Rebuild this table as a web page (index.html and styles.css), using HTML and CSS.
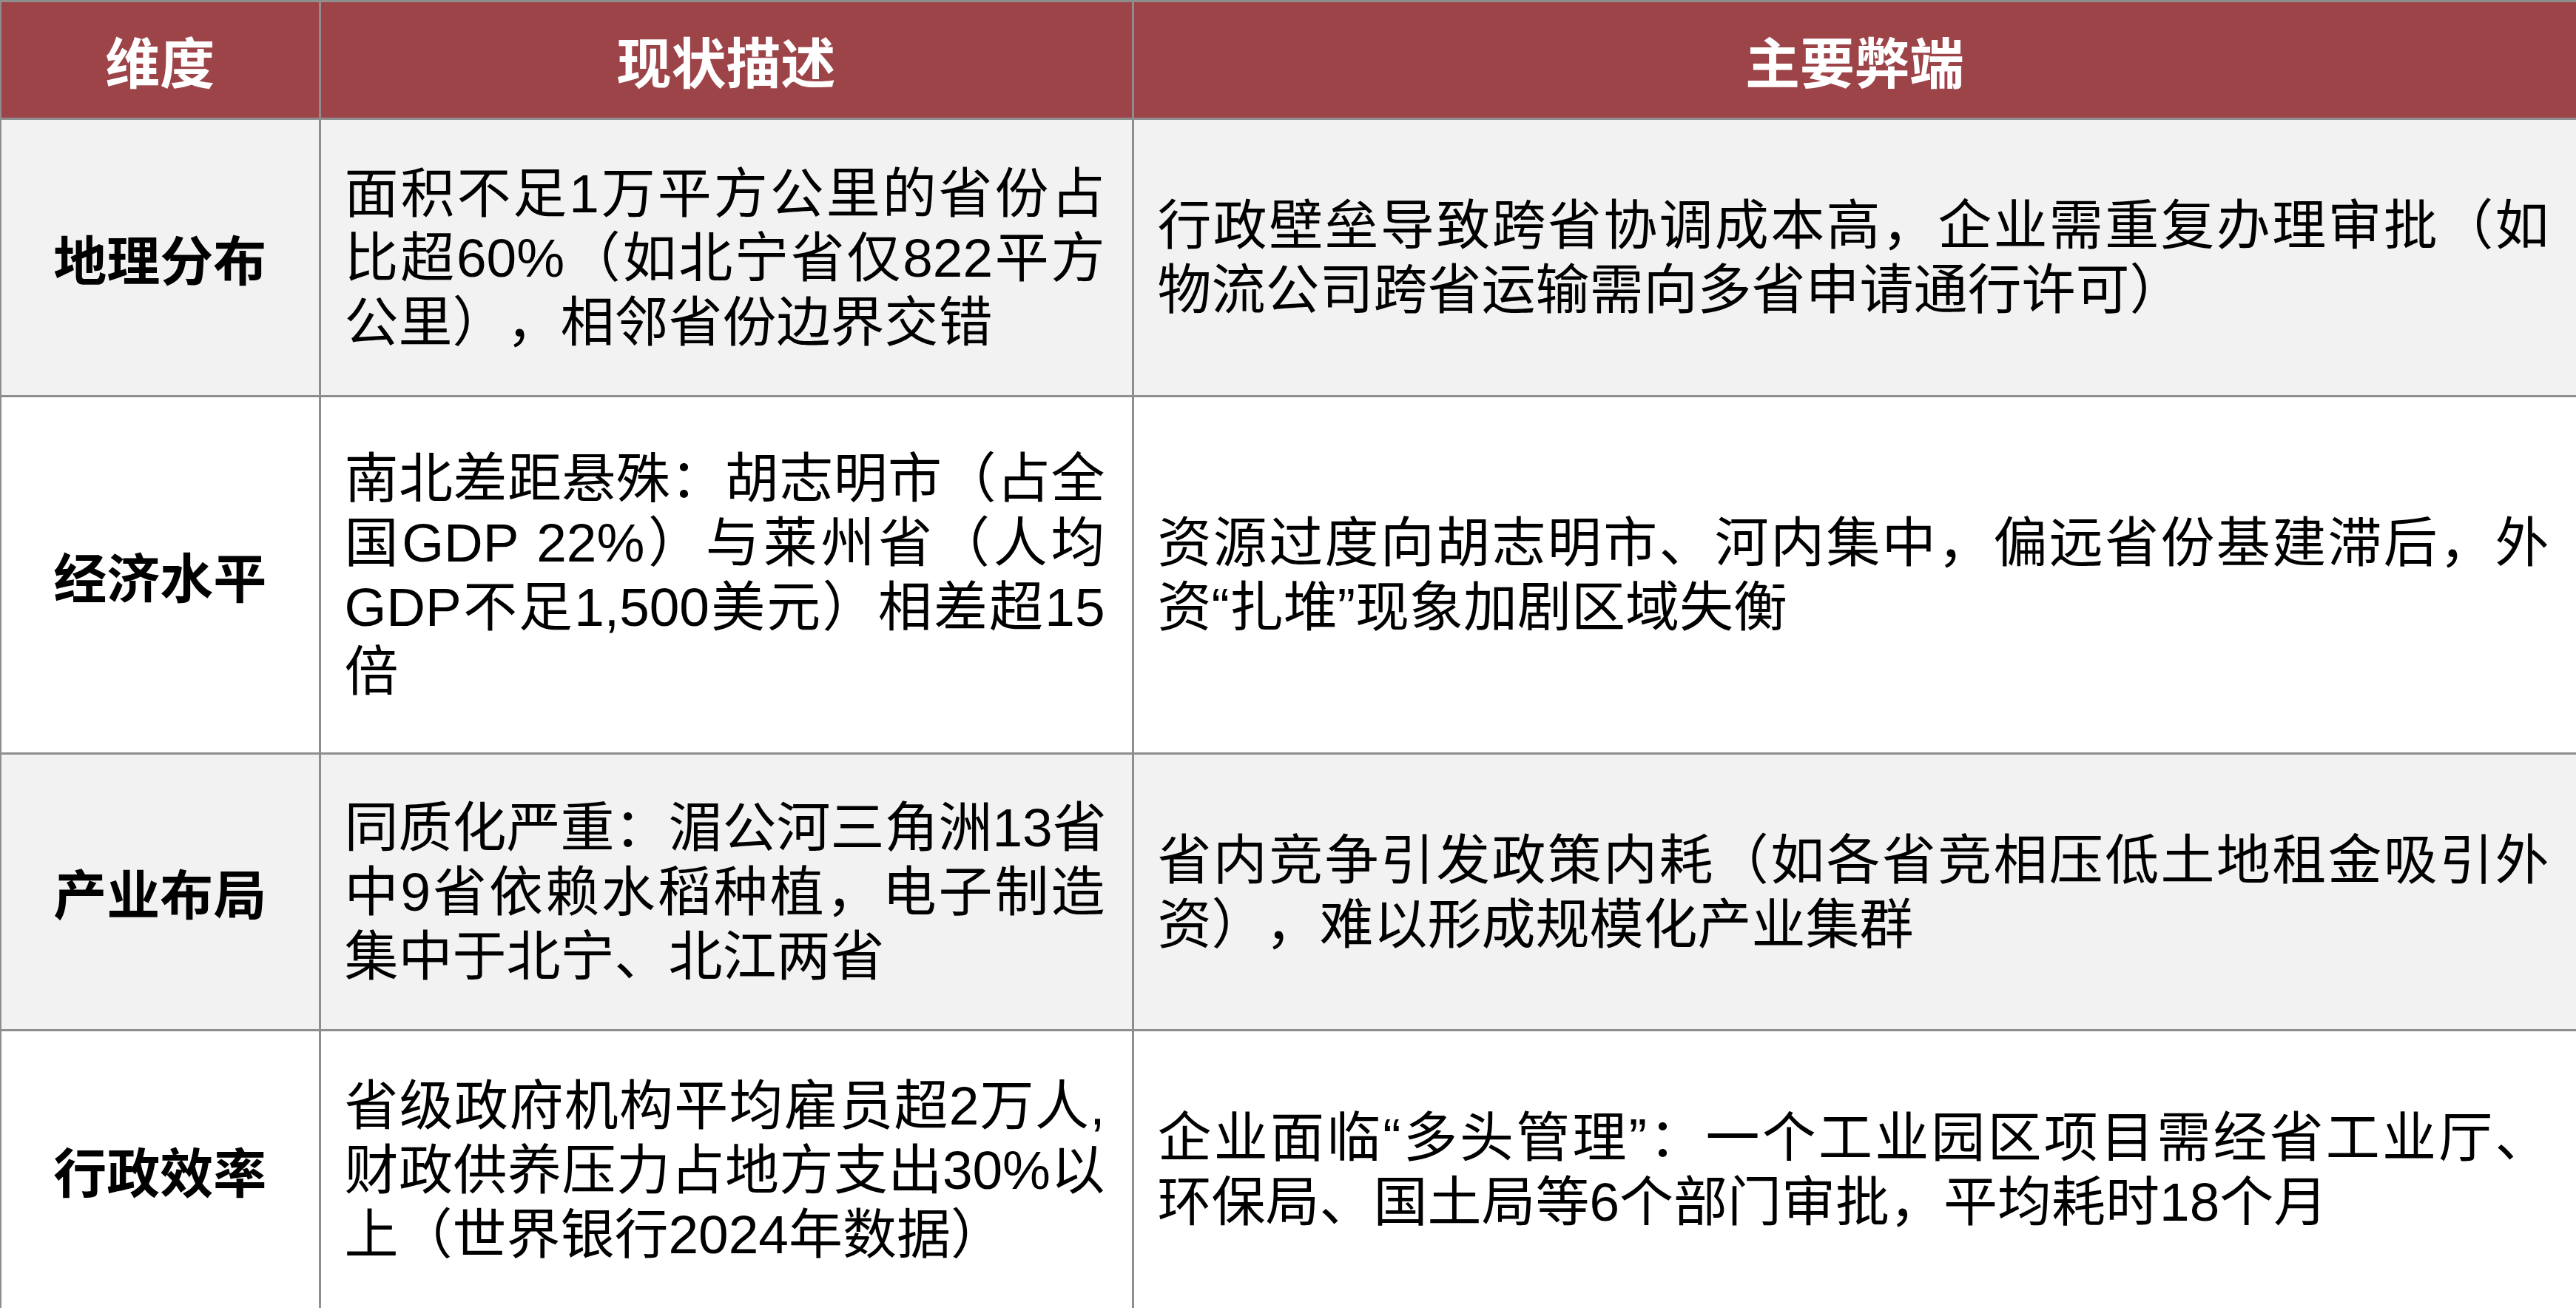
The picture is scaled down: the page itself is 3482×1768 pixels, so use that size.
FILE: index.html
```html
<!DOCTYPE html>
<html lang="zh-CN">
<head>
<meta charset="utf-8">
<title>维度对比表</title>
<link rel="stylesheet" href="styles.css">
</head>
<body>
<table class="grid">
  <colgroup>
    <col class="c-dim">
    <col class="c-now">
    <col class="c-bad">
  </colgroup>
  <thead>
    <tr class="head">
      <th>维度</th>
      <th>现状描述</th>
      <th>主要弊端</th>
    </tr>
  </thead>
  <tbody>
    <tr class="row r1 shade">
      <td class="dim">地理分布</td>
      <td class="txt">
        <span class="ln">面积不足1万平方公里的省份占</span>
        <span class="ln">比超60%（如北宁省仅822平方</span>
        <span class="ln">公里），相邻省份边界交错</span>
      </td>
      <td class="txt">
        <span class="ln">行政壁垒导致跨省协调成本高，企业需重复办理审批（如</span>
        <span class="ln">物流公司跨省运输需向多省申请通行许可）</span>
      </td>
    </tr>
    <tr class="row r2">
      <td class="dim">经济水平</td>
      <td class="txt">
        <span class="ln">南北差距悬殊：胡志明市（占全</span>
        <span class="ln">国GDP 22%）与莱州省（人均</span>
        <span class="ln">GDP不足1,500美元）相差超15</span>
        <span class="ln">倍</span>
      </td>
      <td class="txt">
        <span class="ln">资源过度向胡志明市、河内集中，偏远省份基建滞后，外</span>
        <span class="ln">资“扎堆”现象加剧区域失衡</span>
      </td>
    </tr>
    <tr class="row r3 shade">
      <td class="dim">产业布局</td>
      <td class="txt">
        <span class="ln">同质化严重：湄公河三角洲13省</span>
        <span class="ln">中9省依赖水稻种植，电子制造</span>
        <span class="ln">集中于北宁、北江两省</span>
      </td>
      <td class="txt">
        <span class="ln">省内竞争引发政策内耗（如各省竞相压低土地租金吸引外</span>
        <span class="ln">资），难以形成规模化产业集群</span>
      </td>
    </tr>
    <tr class="row r4">
      <td class="dim">行政效率</td>
      <td class="txt">
        <span class="ln">省级政府机构平均雇员超2万人,</span>
        <span class="ln">财政供养压力占地方支出30%以</span>
        <span class="ln">上（世界银行2024年数据）</span>
      </td>
      <td class="txt">
        <span class="ln">企业面临“多头管理”：一个工业园区项目需经省工业厅、</span>
        <span class="ln">环保局、国土局等6个部门审批，平均耗时18个月</span>
      </td>
    </tr>
  </tbody>
</table>
</body>
</html>
```
FILE: styles.css
```css
html, body {
  margin: 0;
  padding: 0;
  background: #ffffff;
}

body {
  font-family: "Liberation Sans Narrow", "Liberation Sans", "Noto Sans CJK SC", sans-serif;
  color: #000000;
}

.grid {
  width: 3482px;
  border-collapse: collapse;
  table-layout: fixed;
}

.c-dim { width: 431px; }
.c-now { width: 1099px; }
.c-bad { width: 1952px; }

.grid th,
.grid td {
  border-left: 2px solid #8e8e8e;
  border-right: 3px solid #8e8e8e;
  border-top: 3px solid #8e8e8e;
  border-bottom: 3px solid #8e8e8e;
  vertical-align: middle;
}

.head {
  height: 159px;
  background: #9d4449;
}

.head th {
  font-family: "Noto Sans CJK SC", sans-serif;
  color: #ffffff;
  font-size: 74px;
  font-weight: 700;
  line-height: 1;
  text-align: center;
  padding: 0;
}

.row { background: #ffffff; }
.row.shade { background: #f2f2f2; }

.r1 { height: 375px; }
.r2 { height: 483px; }
.r3 { height: 374px; }
.r4 { height: 377px; }

.dim {
  font-family: "Noto Sans CJK SC", sans-serif;
  font-size: 72px;
  font-weight: 700;
  text-align: center;
  line-height: 1.2;
  padding: 0;
}

.txt {
  font-size: 73px;
  line-height: 87px;
  text-spacing-trim: space-all;
  padding: 0 36px 0 32px;
}

.ln {
  display: block;
  white-space: nowrap;
  text-align: justify;
  text-align-last: justify;
}

.ln:last-child {
  text-align-last: left;
}
```
